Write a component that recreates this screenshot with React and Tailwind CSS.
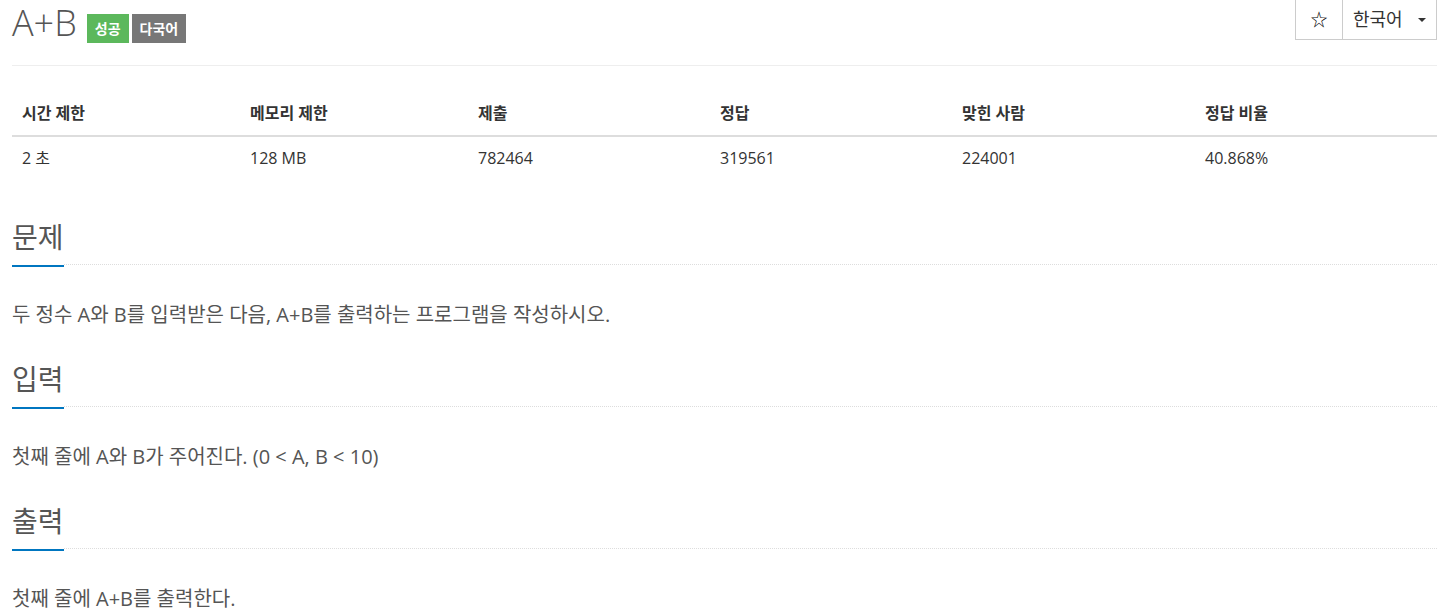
const stats = [
  { label: '시간 제한', value: '2 초' },
  { label: '메모리 제한', value: '128 MB' },
  { label: '제출', value: '782464' },
  { label: '정답', value: '319561' },
  { label: '맞힌 사람', value: '224001' },
  { label: '정답 비율', value: '40.868%' },
];

const sections = [
  { title: '문제', body: '두 정수 A와 B를 입력받은 다음, A+B를 출력하는 프로그램을 작성하시오.' },
  { title: '입력', body: '첫째 줄에 A와 B가 주어진다. (0 < A, B < 10)' },
  { title: '출력', body: '첫째 줄에 A+B를 출력한다.' },
];

function Headline({ title }) {
  return (
    <div className="flex items-end">
      <h2 className="text-[28px] leading-[30px] text-[#555] pb-[13px] border-b-2 border-[#0076c0]">{title}</h2>
      <div className="flex-1 mb-[2px] border-b border-dotted border-[#ddd]" />
    </div>
  );
}

export default function App() {
  return (
    <div
      className="min-h-screen bg-white pl-[12px] pr-[2px] text-[#333]"
      style={{ fontFamily: '"Open Sans", "Noto Sans CJK KR", sans-serif' }}
    >
      {/* title bar */}
      <div className="h-[66px] flex items-start justify-between border-b border-[#eee]">
        <div className="flex items-start pt-[2px]">
          <h1 className="text-[36px] leading-[42px] font-light text-[#555]">A+B</h1>
          <div className="flex gap-[3px] ml-[10px] mt-[12px]">
            <span className="h-[29px] px-2 flex items-center bg-[#5cb85c] text-white text-[14px] font-bold">성공</span>
            <span className="h-[29px] px-2 flex items-center bg-[#777] text-white text-[14px] font-bold">다국어</span>
          </div>
        </div>
        <div className="flex h-[40px] border-x border-b border-[#ccc]">
          <button className="w-[47px] flex items-center justify-center border-r border-[#ccc] text-[17px] text-black">☆</button>
          <button className="w-[93px] flex items-center pl-[10px] text-[18px] text-[#333]">
            한국어
            <span className="ml-[15px] w-0 h-0 border-x-[4px] border-x-transparent border-t-[4px] border-t-[#333]" />
          </button>
        </div>
      </div>

      {/* stats table */}
      <div className="mt-[25px] text-[16px]">
        <div className="grid grid-cols-[228px_228px_242px_242px_243px_1fr] border-b-2 border-[#ddd]">
          {stats.map((s) => (
            <div key={s.label} className="pl-[10px] py-[11px] leading-[22px] font-bold">{s.label}</div>
          ))}
        </div>
        <div className="grid grid-cols-[228px_228px_242px_242px_243px_1fr]">
          {stats.map((s) => (
            <div key={s.label} className="pl-[10px] py-[10px] leading-[22px]">{s.value}</div>
          ))}
        </div>
      </div>

      {/* problem sections */}
      <div className="mt-[43px] flex flex-col gap-[36px]">
        {sections.map((sec) => (
          <section key={sec.title}>
            <Headline title={sec.title} />
            <p className="mt-[34px] text-[20px] leading-[27px] text-[#555]">{sec.body}</p>
          </section>
        ))}
      </div>
    </div>
  );
}
